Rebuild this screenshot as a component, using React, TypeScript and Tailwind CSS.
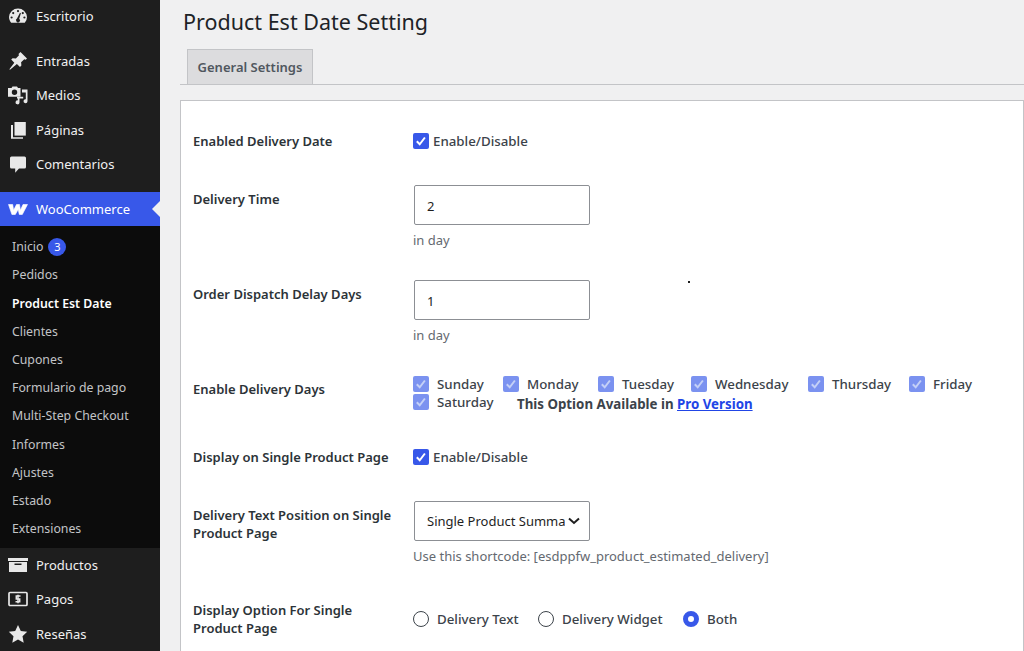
import type { ReactNode } from 'react';

const topItems = [
  { label: 'Entradas', y: 'h-[34px]', icon: 'pin' },
  { label: 'Medios', y: 'h-[34px]', icon: 'media' },
  { label: 'Páginas', y: 'h-[35px]', icon: 'pages' },
  { label: 'Comentarios', y: 'h-[34px]', icon: 'comment' },
];

const subItems = ['Pedidos', 'Product Est Date', 'Clientes', 'Cupones', 'Formulario de pago', 'Multi-Step Checkout', 'Informes', 'Ajustes', 'Estado', 'Extensiones'];

const days = [
  { label: 'Sunday', w: 'w-[90px]' },
  { label: 'Monday', w: 'w-[95px]' },
  { label: 'Tuesday', w: 'w-[93px]' },
  { label: 'Wednesday', w: 'w-[117px]' },
  { label: 'Thursday', w: 'w-[101px]' },
  { label: 'Friday', w: 'w-[80px]' },
];

function MenuIcon({ name }: { name: string }) {
  if (name === 'dash') {
    return (
      <svg viewBox="0 0 20 20" className="w-[20px] h-[20px] fill-[#e8e8e8]">
        <path fillRule="evenodd" d="M10 2.500a9 9 0 0 0-9 8.600c0 2.200.8 4.200 2.200 5.700h13.600a8.500 8.500 0 0 0 2.200-5.700 9 9 0 0 0-9-8.600ZM10 4a1.100 1.100 0 1 1 0 2.200A1.100 1.100 0 0 1 10 4ZM5.200 6a1.100 1.100 0 1 1 0 2.200 1.100 1.100 0 0 1 0-2.200Zm9.600 0a1.100 1.100 0 1 1 0 2.200 1.100 1.100 0 0 1 0-2.200ZM3.600 10.400a1.100 1.100 0 1 1 0 2.200 1.100 1.100 0 0 1 0-2.200Zm12.800 0a1.100 1.100 0 1 1 0 2.200 1.100 1.100 0 0 1 0-2.200Zm-3.500-3.200-1.700 5.500a2 2 0 1 1-2.200-.1l3-5.800.9.400Z" />
      </svg>
    );
  }
  if (name === 'pin') {
    return (
      <svg viewBox="0 0 20 20" className="w-[20px] h-[20px] fill-[#e8e8e8]">
        <path d="M12.500 1 19 7.500l-1.300 1.200-1.400-.5-3.200 3.100.3 3.300-1.400 1.400-3.100-3.100L2 18.800l-.6-.5 4.900-6.600-3.100-3.100 1.400-1.400 3.300.3 3.100-3.200-.5-1.400Z" />
      </svg>
    );
  }
  if (name === 'media') {
    return (
      <svg viewBox="0 0 20 20" className="w-[20px] h-[20px] fill-[#e8e8e8]">
        <path fillRule="evenodd" d="M0 3h3.500l1-1.500h4.500l1 1.500H12.500v8.800H0ZM6.500 4.500a2.700 2.700 0 1 0 0 5.400 2.700 2.700 0 0 0 0-5.400Z" />
        <path d="M14 4.500h5.500v11.700a2 2 0 1 1-1.700-2V7.600H14ZM9 11.800h6.200v1.600h-3.700v4a2 2 0 1 1-1.700-2v-2H9Z" />
      </svg>
    );
  }
  if (name === 'pages') {
    return (
      <svg viewBox="0 0 20 20" className="w-[20px] h-[20px] fill-[#e8e8e8]">
        <path d="M6.500 2h11.300v13.600H6.500Z" />
        <path d="M3 5h2v12.200h10v1.600H3Z" />
      </svg>
    );
  }
  if (name === 'comment') {
    return (
      <svg viewBox="0 0 20 20" className="w-[20px] h-[20px] fill-[#e8e8e8]">
        <path d="M3.500 2.500h13A1.500 1.500 0 0 1 18 4v9a1.500 1.500 0 0 1-1.500 1.500H11l-3.800 4.200v-4.200H3.500A1.500 1.500 0 0 1 2 13V4a1.500 1.500 0 0 1 1.500-1.500Z" />
      </svg>
    );
  }
  if (name === 'woo') {
    return (
      <svg viewBox="0 0 20 11" className="w-[20px] h-[11px] fill-white stroke-white stroke-[0.6px]">
        <path strokeLinejoin="round" d="M.5.500h4.200l.9 5.800L8.500.500h3l.9 5.800L15 .500h4.500L14.300 10.500h-3l-1.100-5-2.900 5H3.900Z" />
      </svg>
    );
  }
  if (name === 'box') {
    return (
      <svg viewBox="0 0 20 20" className="w-[20px] h-[20px] fill-[#e8e8e8]">
        <path fillRule="evenodd" d="M0 3h20v3H0ZM1 7h18v10H1ZM6.500 8.500V10h7V8.500Z" />
      </svg>
    );
  }
  if (name === 'pay') {
    return (
      <svg viewBox="0 0 20 20" className="w-[20px] h-[20px]">
        <rect x="1" y="3.500" width="18" height="13" rx="1" fill="none" stroke="#e8e8e8" strokeWidth="1.700" />
        <path d="M12.500 7H8.300v2.900h3.400v2.800H7.500M10 5.800v8.400" fill="none" stroke="#e8e8e8" strokeWidth="1.500" />
      </svg>
    );
  }
  return (
    <svg viewBox="0 0 20 20" className="w-[20px] h-[20px] fill-[#e8e8e8]">
      <path d="m10 1 2.800 6 6.400.8-4.700 4.400 1.200 6.500L10 15.500l-5.700 3.200 1.200-6.500L.8 7.800l6.400-.8Z" />
    </svg>
  );
}

function MenuRow({ label, icon, className }: { label: string; icon: string; className: string }) {
  return (
    <div className={`flex items-center text-[#f0f0f1] ${className}`}>
      <span className="w-[36px] pl-2 flex items-center justify-start shrink-0">
        <MenuIcon name={icon} />
      </span>
      <span>{label}</span>
    </div>
  );
}

function Check({ faded = false }: { faded?: boolean }) {
  return (
    <span className={`w-4 h-4 rounded-[2px] flex items-center justify-center shrink-0 ${faded ? 'bg-[#7b92f0]' : 'bg-[#3858e9]'}`}>
      <svg viewBox="0 0 16 16" className="w-4 h-4 fill-none">
        <path d="m3.800 8.300 2.900 3 5.200-6.800" stroke={faded ? '#c4d0f7' : '#ffffff'} strokeWidth="2" />
      </svg>
    </span>
  );
}

function Radio({ checked = false }: { checked?: boolean }) {
  return checked ? (
    <span className="w-4 h-4 rounded-full border-[5px] border-[#3858e9] bg-white shrink-0" />
  ) : (
    <span className="w-4 h-4 rounded-full border border-[#3c434a] bg-white shrink-0" />
  );
}

function Row({ label, className, children }: { label: ReactNode; className: string; children: ReactNode }) {
  return (
    <div className={`flex ${className}`}>
      <div className="w-[220px] shrink-0 pr-4 font-semibold text-[#2c3338]">{label}</div>
      <div className="flex-1 min-w-0">{children}</div>
    </div>
  );
}

function NumberField({ value }: { value: string }) {
  return (
    <>
      <input
        readOnly
        value={value}
        className="block ml-px w-[176px] h-10 border border-[#8c8f94] rounded-[2px] bg-white px-3 pt-px text-[#1e1e1e] outline-none"
      />
      <p className="mt-1.5 text-[#646970]">in day</p>
    </>
  );
}

export default function App() {
  return (
    <div className="relative flex w-[1024px] h-[651px] overflow-hidden bg-[#f0f0f1] font-['Noto_Sans','Open_Sans',sans-serif] text-[13px] leading-[18px] text-[#3c434a]">
      <aside className="w-[160px] shrink-0 bg-[#1e1e1e] flex flex-col">
        <MenuRow label="Escritorio" icon="dash" className="h-[32px] -mt-px pt-px" />
        <div className="mt-[13px]">
          {topItems.map((item) => (
            <MenuRow key={item.label} label={item.label} icon={item.icon} className={item.y} />
          ))}
        </div>
        <div className="relative mt-[11px] h-[34px] bg-[#3858e9] flex items-center text-white">
          <span className="w-[36px] pl-2 shrink-0 flex items-center">
            <MenuIcon name="woo" />
          </span>
          <span>WooCommerce</span>
          <span className="absolute right-0 top-[9px] border-y-[8px] border-r-[8px] border-y-transparent border-r-[#f0f0f1]" />
        </div>
        <div className="bg-[#0c0c0c] h-[322px] pt-[7px] px-3 text-[12.3px] text-[#c3c4c7]">
          <div className="h-[28.3px] flex items-center gap-[5px]">
            <span>Inicio</span>
            <span className="w-[18px] h-[18px] rounded-full bg-[#3858e9] text-white text-[11px] flex items-center justify-center">3</span>
          </div>
          {subItems.map((item) => (
            <div key={item} className={`h-[28.2px] flex items-center whitespace-nowrap ${item === 'Product Est Date' ? 'font-semibold text-white' : ''}`}>
              {item}
            </div>
          ))}
        </div>
        <MenuRow label="Productos" icon="box" className="h-[34px]" />
        <MenuRow label="Pagos" icon="pay" className="h-[34px]" />
        <MenuRow label="Reseñas" icon="star" className="h-[35px]" />
      </aside>

      <main className="flex-1 min-w-0 pl-5">
        <h1 className="pl-[3px] pt-[6px] text-[21.5px] leading-[31px] text-[#1d2327]">Product Est Date Setting</h1>
        <div className="mt-[12px] h-[36px] border-b border-[#c3c4c7] pl-[7px]">
          <div className="w-[126px] h-[36px] border border-[#c3c4c7] bg-[#dcdcde] flex items-center justify-center font-semibold text-[#50575e]">
            General Settings
          </div>
        </div>
        <section className="mt-[15px] h-[560px] border border-[#c3c4c7] bg-white pl-3">
          <Row label="Enabled Delivery Date" className="mt-[31px]">
            <label className="flex items-center gap-1 font-medium text-[13.3px]">
              <Check />
              Enable/Disable
            </label>
          </Row>
          <Row label={<span className="block pt-[5px]">Delivery Time</span>} className="mt-[35px]">
            <NumberField value="2" />
          </Row>
          <Row label={<span className="block pt-[5px]">Order Dispatch Delay Days</span>} className="mt-[31px]">
            <NumberField value="1" />
          </Row>
          <Row label={<span className="block pt-[5px]">Enable Delivery Days</span>} className="mt-[31px]">
            <div className="flex text-[13.3px] h-[18px]">
              {days.map((day) => (
                <label key={day.label} className={`flex items-center gap-2 font-medium ${day.w}`}>
                  <Check faded />
                  {day.label}
                </label>
              ))}
            </div>
            <div className="flex items-center text-[13.3px] h-[18px]">
              <label className="flex items-center gap-2 font-medium w-[104px]">
                <Check faded />
                Saturday
              </label>
              <span className="font-bold pt-1">
                This Option Available in{' '}
                <a href="#pro" className="text-[#2145e6] underline">Pro Version</a>
              </span>
            </div>
          </Row>
          <Row label="Display on Single Product Page" className="mt-[37px]">
            <label className="flex items-center gap-1 font-medium text-[13.3px]">
              <Check />
              Enable/Disable
            </label>
          </Row>
          <Row label={<span className="block pt-[5px]">Delivery Text Position on Single Product Page</span>} className="mt-[35px]">
            <div className="relative ml-px w-[176px] h-10 border border-[#8c8f94] rounded-[2px] bg-white pl-3 pr-6 flex items-center text-[#1e1e1e]">
              <span className="overflow-hidden whitespace-nowrap">Single Product Summary</span>
              <svg viewBox="0 0 12 8" className="absolute right-[9px] top-[15px] w-3 h-2 fill-none stroke-[#1e1e1e] stroke-2">
                <path d="m1 1.500 5 4.500 5-4.500" />
              </svg>
            </div>
            <p className="mt-1.5 text-[#646970]">Use this shortcode: [esdppfw_product_estimated_delivery]</p>
          </Row>
          <Row label="Display Option For Single Product Page" className="mt-[36px]">
            <div className="flex items-center pt-[9px] font-medium text-[13.3px]">
              <span className="flex items-center gap-2 w-[125px]"><Radio />Delivery Text</span>
              <span className="flex items-center gap-2 w-[145px]"><Radio />Delivery Widget</span>
              <span className="flex items-center gap-2"><Radio checked />Both</span>
            </div>
          </Row>
        </section>
      </main>
      <span className="absolute left-[688px] top-[281px] w-[2px] h-[2px] bg-[#1e1e1e]" />
    </div>
  );
}
